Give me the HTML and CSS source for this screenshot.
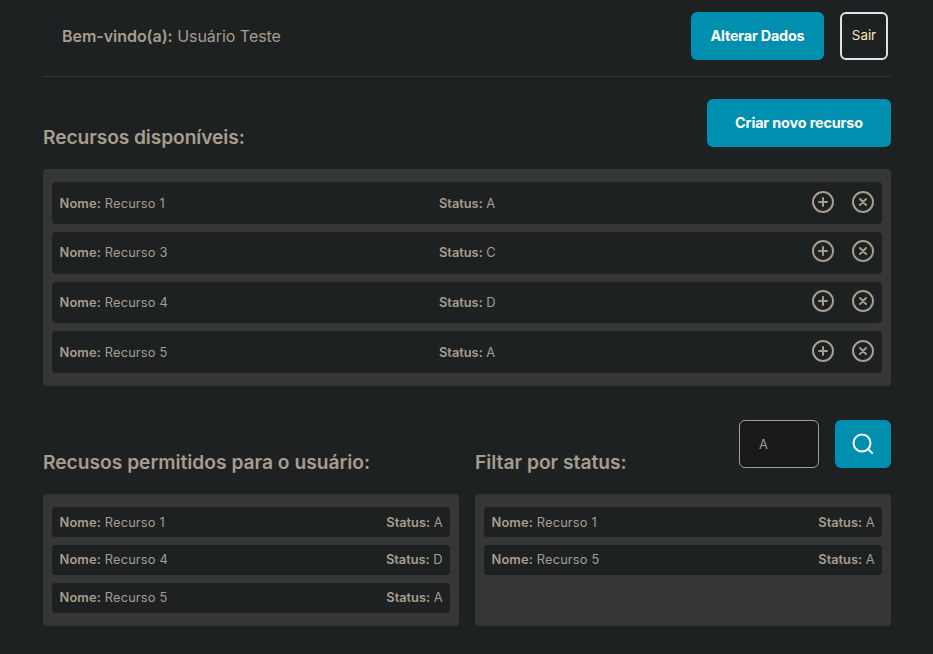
FILE: index.html
```html
<!DOCTYPE html>
<html lang="pt-BR">
<head>
<meta charset="utf-8">
<title>Recursos</title>
<link rel="stylesheet" href="styles.css">
</head>
<body>
<svg width="0" height="0" class="defs">
  <symbol id="plus" viewBox="0 0 24 24"><circle cx="12" cy="12" r="10"/><path d="M12 8v8M8 12h8"/></symbol>
  <symbol id="close" viewBox="0 0 24 24"><circle cx="12" cy="12" r="10"/><path d="M9 9l6 6M15 9l-6 6"/></symbol>
</svg>
<main class="page">
  <header class="header">
    <p class="welcome"><strong>Bem-vindo(a):</strong> Usuário Teste</p>
    <div class="actions">
      <button class="btn btn-edit">Alterar Dados</button>
      <button class="btn-exit">Sair</button>
    </div>
  </header>
  <section class="available">
    <div class="heading">
      <h2>Recursos disponíveis:</h2>
      <button class="btn btn-create">Criar novo recurso</button>
    </div>
    <ul class="panel">
      <li class="row row-tall"><span class="name"><b>Nome:</b> Recurso 1</span><span><b>Status:</b> A</span><span class="icons"><svg class="icon"><use href="#plus"/></svg><svg class="icon"><use href="#close"/></svg></span></li>
      <li class="row row-tall"><span class="name"><b>Nome:</b> Recurso 3</span><span><b>Status:</b> C</span><span class="icons"><svg class="icon"><use href="#plus"/></svg><svg class="icon"><use href="#close"/></svg></span></li>
      <li class="row row-tall"><span class="name"><b>Nome:</b> Recurso 4</span><span><b>Status:</b> D</span><span class="icons"><svg class="icon"><use href="#plus"/></svg><svg class="icon"><use href="#close"/></svg></span></li>
      <li class="row row-tall"><span class="name"><b>Nome:</b> Recurso 5</span><span><b>Status:</b> A</span><span class="icons"><svg class="icon"><use href="#plus"/></svg><svg class="icon"><use href="#close"/></svg></span></li>
    </ul>
  </section>
  <div class="columns">
    <section class="column">
      <div class="heading"><h2>Recusos permitidos para o usuário:</h2></div>
      <ul class="panel">
        <li class="row"><span class="name"><b>Nome:</b> Recurso 1</span><span><b>Status:</b> A</span></li>
        <li class="row"><span class="name"><b>Nome:</b> Recurso 4</span><span><b>Status:</b> D</span></li>
        <li class="row"><span class="name"><b>Nome:</b> Recurso 5</span><span><b>Status:</b> A</span></li>
      </ul>
    </section>
    <section class="column">
      <div class="heading">
        <h2>Filtar por status:</h2>
        <form class="filter">
          <input class="field" type="text" value="A" aria-label="Status">
          <button class="btn btn-search" type="button" aria-label="Buscar"><svg class="search" viewBox="0 0 24 24"><circle cx="11" cy="11" r="8.5"/><path d="M17 17l4 4"/></svg></button>
        </form>
      </div>
      <ul class="panel">
        <li class="row"><span class="name"><b>Nome:</b> Recurso 1</span><span><b>Status:</b> A</span></li>
        <li class="row"><span class="name"><b>Nome:</b> Recurso 5</span><span><b>Status:</b> A</span></li>
      </ul>
    </section>
  </div>
</main>
</body>
</html>
```
FILE: styles.css
```css
* { box-sizing: border-box; margin: 0; padding: 0; }
body {
  background: #1e2122;
  color: #a69d8e;
  font-family: Inter, sans-serif;
  font-size: 12.8px;
  overflow: hidden;
}
button, input { font: inherit; }
.defs { display: block; }
.page { width: 848px; margin-left: 43px; }
.header {
  height: 77px;
  padding: 12px 3px 16px 19px;
  display: flex;
  justify-content: space-between;
  align-items: center;
  border-bottom: 1px solid #363636;
}
.welcome { font-size: 16px; letter-spacing: -0.04px; }
.welcome strong, b { font-weight: 600; }
.actions { display: flex; gap: 16px; }
.btn {
  height: 48px;
  padding-bottom: 1px;
  border: 0;
  border-radius: 6px;
  background: #008fae;
  color: #fff;
  font-size: 14.4px;
  font-weight: 700;
  letter-spacing: -0.2px;
}
.btn-edit { width: 133px; }
.btn-create { width: 184px; letter-spacing: -0.15px; }
.btn-exit {
  width: 48px;
  height: 48px;
  padding-bottom: 2px;
  border: 2px solid #e1e1e6;
  border-radius: 6px;
  background: transparent;
  color: #ffe8c0;
  font-size: 13.33px;
}
.heading { display: flex; justify-content: space-between; height: 48px; }
.available .heading { margin: 22px 0; }
h2 { font-size: 19.2px; font-weight: 600; line-height: 24px; align-self: flex-end; white-space: nowrap; }
.available h2 { margin-bottom: -2px; letter-spacing: -0.09px; }
.panel {
  list-style: none;
  background: #363636;
  border-radius: 4px;
  padding: 13px 9px;
  display: flex;
  flex-direction: column;
  gap: 8px;
}
.row {
  height: 30px;
  padding: 0 7.5px;
  border-radius: 4px;
  background: #1e2122;
  display: flex;
  justify-content: space-between;
  align-items: center;
}
.name { letter-spacing: 0.17px; }
.column .row + .row { padding-bottom: 2px; }
.row-tall {
  height: 41.85px;
  display: grid;
  grid-template-columns: 379.5px 1fr auto;
}
.row-tall:first-child > span:not(.icons) { padding-top: 2px; }
.row-tall:nth-child(2) .icons { padding-bottom: 2px; }
.available .row { padding-right: 7px; }
.icons { display: flex; gap: 16px; }
.icon { width: 24px; height: 24px; margin-top: -2px; }
.icon, .search { fill: none; stroke: currentColor; stroke-width: 2; stroke-linecap: round; stroke-linejoin: round; }
.available .panel { height: 217px; }
.columns { display: grid; grid-template-columns: 416px 416px; gap: 16px; margin-top: 34px; }
.column { display: flex; flex-direction: column; }
.column .heading { margin-bottom: 26px; }
.column .panel { height: 132px; }
.column h2 { margin-bottom: -6px; }
.filter { display: flex; gap: 16px; }
.field {
  width: 80px;
  height: 48px;
  padding: 0 19px;
  border: 1px solid #a69d8e;
  border-radius: 6px;
  background: #1a1a1d;
  color: #a69d8e;
}
.btn-search { width: 56px; padding: 0; display: flex; align-items: center; justify-content: center; }
.search { width: 24px; height: 24px; }
```
